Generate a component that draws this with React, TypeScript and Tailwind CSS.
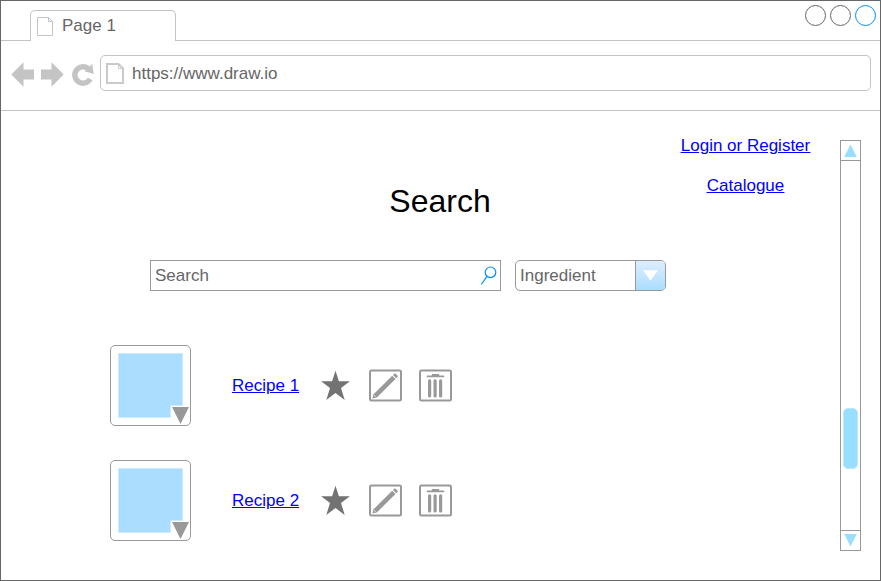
import React from "react";

function PageIcon({ bold = false }: { bold?: boolean }) {
  return bold ? (
    <svg width="20" height="22" viewBox="0 0 20 22" fill="none" stroke="#cacaca" className="shrink-0">
      <path d="M1 1H12.5L17 5.5V20H1Z" strokeWidth="2" />
      <path d="M12.5 1V5.5H17" strokeWidth="1" />
    </svg>
  ) : (
    <svg width="18" height="20" viewBox="0 0 18 20" fill="none" stroke="#c4c4c4" className="shrink-0">
      <path d="M1.5 1.5H12.5L16.5 5.5V19.5H1.5Z" />
      <path d="M12.5 1.5V5.5H16.5" />
    </svg>
  );
}

function TabBar() {
  return (
    <div className="flex h-10 items-end">
      <div className="w-[29px] border-b border-[#c4c4c4]" />
      <div className="flex h-[31px] w-[146px] rounded-t-[5px] border border-b-0 border-[#c4c4c4] pl-[5px]">
        <div className="pt-[5px]">
          <PageIcon />
        </div>
        <span className="pt-[5px] pl-2 leading-5 text-[#666]">Page 1</span>
      </div>
      <div className="flex h-10 flex-1 justify-end gap-1 border-b border-[#c4c4c4] pt-1 pr-[4px]">
        <div className="h-[21px] w-[21px] rounded-full border border-[#666]" />
        <div className="h-[21px] w-[21px] rounded-full border border-[#666]" />
        <div className="h-[21px] w-[21px] rounded-full border border-[#008cff]" />
      </div>
    </div>
  );
}

function Toolbar() {
  return (
    <div className="flex h-[70px] border-b border-[#c4c4c4] pt-[14px] pr-[9px]">
      <svg width="99" height="40" viewBox="1 55 99 40" fill="#c4c4c4" className="shrink-0">
        <path d="M11.3 74.5L23.5 62.3V69.5H34V79.5H23.5V86.7Z" />
        <path d="M63.7 74.5L51.5 62.3V69.5H41V79.5H51.5V86.7Z" />
        <path d="M90.2 79A8.2 8.2 0 1 1 88.2 68.6" fill="none" stroke="#c4c4c4" strokeWidth="5.4" />
        <path d="M92.2 64L93.7 74L84.5 71.2Z" />
      </svg>
      <div className="flex h-9 flex-1 rounded-[5px] border border-[#c4c4c4] pl-[5px]">
        <div className="pt-[7px]">
          <PageIcon bold />
        </div>
        <span className="pt-2 pl-[6px] leading-5 text-[#666]">https://www.draw.io</span>
      </div>
    </div>
  );
}

function RecipeRow({ name }: { name: string }) {
  return (
    <div className="flex h-[81px]">
      <svg width="81" height="81" viewBox="0 0 81 81" className="shrink-0">
        <rect x=".5" y=".5" width="80" height="80" rx="4.5" fill="#fff" stroke="#999" />
        <path d="M8.5 8.5H72.5V60.5H60.5V72.5H8.5Z" fill="#aaddff" stroke="#ccebff" />
        <path d="M62 62H79L70.5 79Z" fill="#999" />
      </svg>
      <a href="#" className="ml-[41px] w-[88px] pt-[31px] leading-5 text-[#0000ff] underline">{name}</a>
      <svg width="142" height="34" viewBox="320 369 142 34" className="mt-6 shrink-0">
        <path d="M335.5 370.8L338.9 381.3H349.9L341 387.9L344.7 400L335.5 393L326.3 400L330 387.9L321.1 381.3H332.1Z" fill="#737373" />
        <g fill="none" stroke="#999" strokeWidth="2">
          <rect x="370" y="370.5" width="31" height="30" rx="1.5" />
          <rect x="420" y="370.5" width="31" height="30" rx="1.5" />
        </g>
        <g fill="#999">
          <path d="M372.4 398.6L373.6 394.3L392.2 375.7L395.5 379L376.8 397.5Z" />
          <path d="M393 374.9L394.2 373.7Q394.9 373.1 395.6 373.7L397.5 375.6Q398.1 376.3 397.5 377L396.3 378.2Z" />
          <path d="M427.5 375.4H431.8V374.6Q431.8 373.9 432.5 373.9H438.5Q439.2 373.9 439.2 374.6V375.4H443.5Q444.4 375.4 444.4 376.3T443.5 377.2H427.5Q426.6 377.2 426.6 376.3T427.5 375.4Z" />
          <rect x="428" y="379.3" width="3.2" height="18.2" rx="1.5" />
          <rect x="433.5" y="379.3" width="3.2" height="18.2" rx="1.5" />
          <rect x="439" y="379.3" width="3.2" height="18.2" rx="1.5" />
        </g>
        <path d="M374 395L376.2 397.2" stroke="#fff" strokeWidth=".6" />
      </svg>
    </div>
  );
}

function Scrollbar() {
  return (
    <div className="mt-[29px] flex h-[411px] w-[21px] flex-col border border-[#999]">
      <div className="flex h-5 items-center justify-center border-b border-[#999]">
        <svg width="13" height="13" viewBox="0 0 13 13"><path d="M6.5 .5L12.8 13H.2Z" fill="#99ddff" /></svg>
      </div>
      <div className="flex-1 px-[2px] pt-[247px]">
        <div className="h-[61px] rounded-[5px] border border-[#b8e8ff] bg-[#99ddff]" />
      </div>
      <div className="flex h-5 items-center justify-center border-t border-[#999]">
        <svg width="13" height="13" viewBox="0 0 13 13"><path d="M.2 0H12.8L6.5 12.5Z" fill="#99ddff" /></svg>
      </div>
    </div>
  );
}

export default function App() {
  return (
    <div className="h-[581px] w-[881px] overflow-hidden border border-[#666] bg-white font-['Liberation_Sans',Arial,sans-serif] text-[17px]">
      <TabBar />
      <Toolbar />
      <div className="flex h-[469px]">
        <main className="w-[679px]">
          <h1 className="ml-[339px] w-[200px] pt-[70px] text-center text-[32px] leading-10 text-black">Search</h1>
          <div className="mt-[39px] ml-[149px] flex gap-[14px]">
            <div className="flex h-[31px] w-[351px] justify-between border border-[#999] pl-1">
              <span className="pt-[5px] leading-5 text-[#666]">Search</span>
              <svg width="24" height="29" viewBox="476 261 24 29" fill="none" stroke="#008cff" strokeWidth="1.2">
                <circle cx="490.5" cy="272.3" r="5.3" />
                <path d="M487 276.3L481.3 284.5" />
              </svg>
            </div>
            <div className="flex h-[31px] w-[151px] overflow-hidden rounded-[5px] border border-[#999]">
              <span className="w-[119px] pt-[5px] pl-1 leading-5 text-[#666]">Ingredient</span>
              <div className="flex flex-1 items-center justify-center border-l border-[#999] bg-linear-to-b from-[#deedff] to-[#aaddff]">
                <svg width="15" height="11" viewBox="0 0 15 11"><path d="M0 .3H15L7.5 10.8Z" fill="#fff" /></svg>
              </div>
            </div>
          </div>
          <div className="mt-[54px] ml-[109px] flex flex-col gap-[34px]">
            <RecipeRow name="Recipe 1" />
            <RecipeRow name="Recipe 2" />
          </div>
        </main>
        <nav className="flex w-[131px] flex-col items-center gap-5 pt-[25px] leading-5 whitespace-nowrap text-[#0000ff] underline">
          <a href="#">Login or Register</a>
          <a href="#">Catalogue</a>
        </nav>
        <div className="ml-[29px]">
          <Scrollbar />
        </div>
      </div>
    </div>
  );
}
